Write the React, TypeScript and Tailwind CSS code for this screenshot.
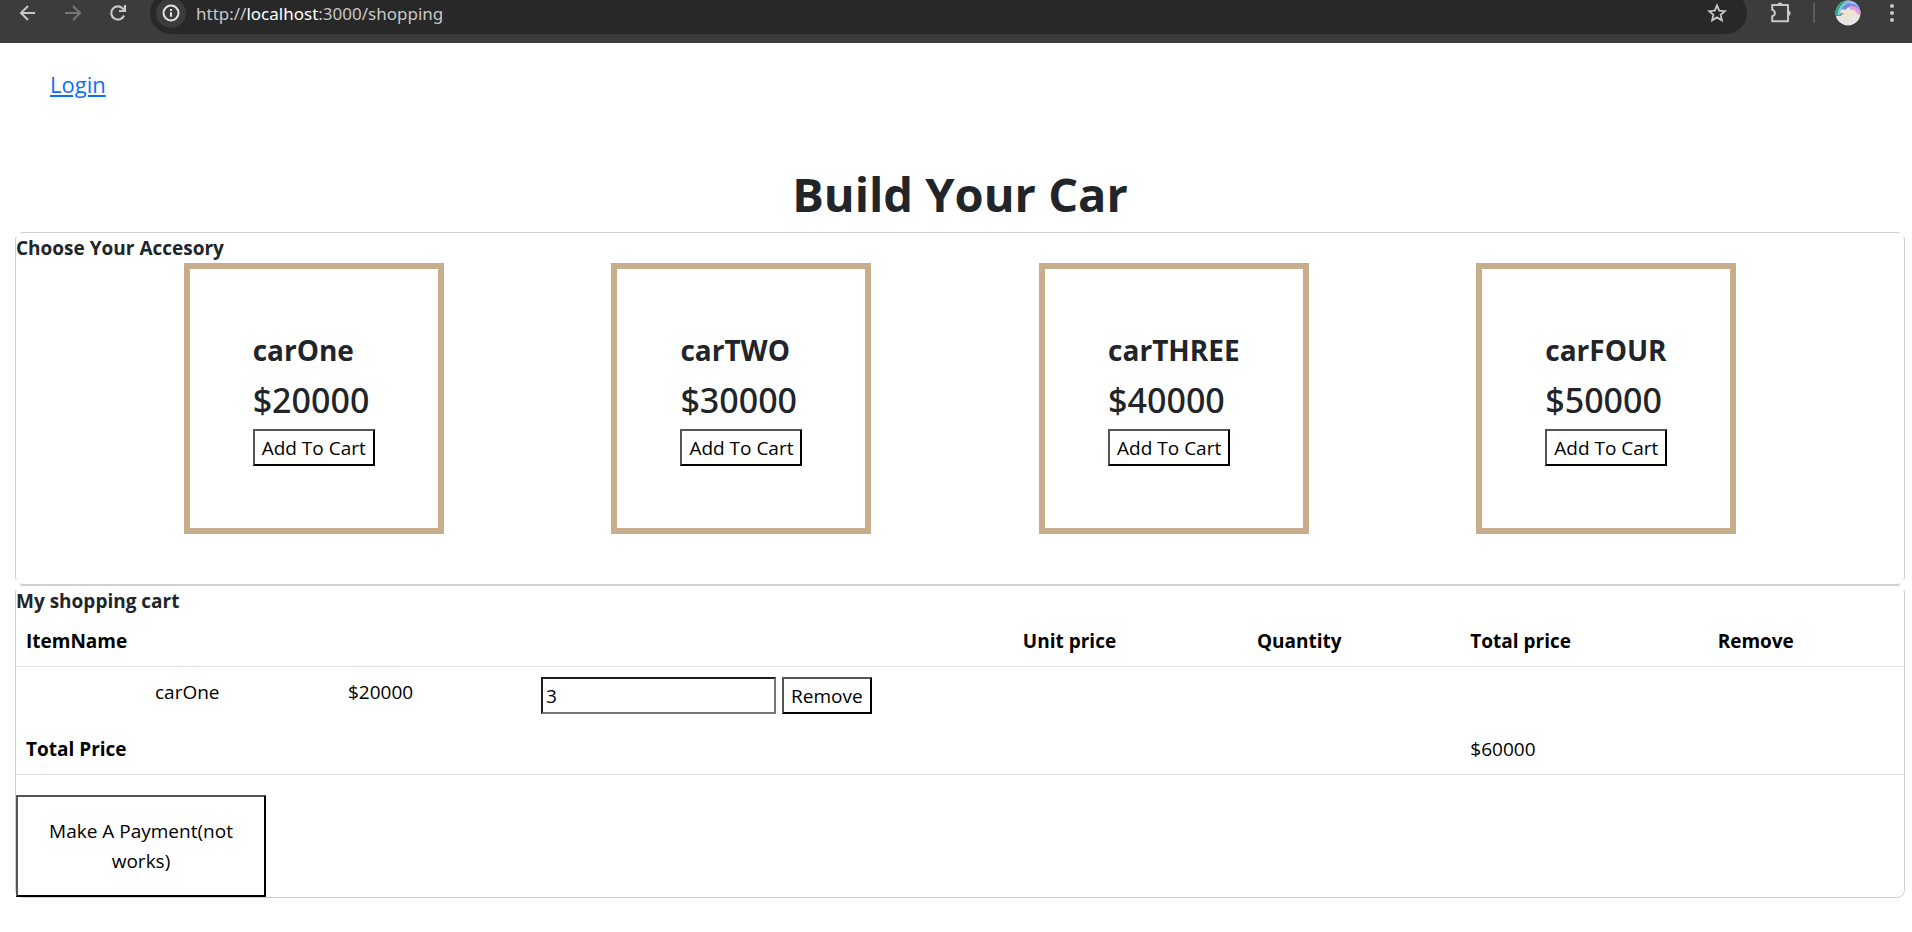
import { useState } from "react";

const cars = [
  { name: "carOne", price: 20000 },
  { name: "carTWO", price: 30000 },
  { name: "carTHREE", price: 40000 },
  { name: "carFOUR", price: 50000 },
];

const buttonClass =
  "border-2 border-t-[#555] border-l-[#555] border-r-black border-b-black bg-white text-black";

function BrowserBar() {
  return (
    <header className="h-[43px] overflow-hidden bg-[#3c3c3c] text-[#c7c7c7]">
      <div className="-mt-2 flex h-[42px] items-center">
        <button aria-label="Back" className="ml-[18px]">
          <svg className="size-5" viewBox="0 0 20 20" fill="none" stroke="currentColor" strokeWidth="2">
            <path d="M17 10H3.5M10 3L3 10l7 7" />
          </svg>
        </button>
        <button aria-label="Forward" className="ml-[25px] text-[#777]">
          <svg className="size-5" viewBox="0 0 20 20" fill="none" stroke="currentColor" strokeWidth="2">
            <path d="M2 10h13.500M10 3l7 7-7 7" />
          </svg>
        </button>
        <button aria-label="Reload" className="ml-[25px]">
          <svg className="size-5" viewBox="0 0 20 20" fill="none" stroke="currentColor" strokeWidth="2.200">
            <path d="M16 12.500a6.600 6.600 0 1 1-1.400-7.200l1.900 1.900" />
            <path d="M17 2v6h-6" />
          </svg>
        </button>
        <div className="ml-[22px] flex h-[42px] flex-1 items-center rounded-full bg-[#282828] pl-1.5 pr-5">
          <button aria-label="Site information" className="flex size-[30px] items-center justify-center rounded-full bg-[#3c3c3c] text-[#e3e3e3]">
            <svg className="size-[18px]" viewBox="0 0 18 18" fill="none" stroke="currentColor" strokeWidth="2">
              <circle cx="9" cy="9" r="7.500" />
              <path d="M9 8.200v4.600M9 5v2" />
            </svg>
          </button>
          <p className="ml-2.5 flex-1 pt-0.5 font-['Noto_Sans','Open_Sans',sans-serif] text-[17px] text-[#c7c7c7]">
            http://<span className="text-white">localhost</span>:3000/shopping
          </p>
          <button aria-label="Bookmark">
            <svg className="size-5" viewBox="0 0 20 20" fill="none" stroke="currentColor" strokeWidth="1.800">
              <path d="M10 2.400l2.200 5.200 5.700.5-4.300 3.700 1.300 5.500-4.900-2.900-4.900 2.900 1.300-5.500-4.300-3.700 5.700-.5z" />
            </svg>
          </button>
        </div>
        <button aria-label="Extensions" className="ml-[22px]">
          <svg className="size-6" viewBox="0 0 24 24" fill="none" stroke="currentColor" strokeWidth="2">
            <path d="M3.200 4h15.800v16.300H3.200v-5c3.600-1 3.600-5.400 0-6.400z" strokeLinejoin="round" />
            <path d="M8.500 4a2.600 2.600 0 0 1 5.200 0zM19 9.600a2.600 2.600 0 0 1 0 5.200z" fill="currentColor" stroke="none" />
          </svg>
        </button>
        <span className="ml-5 h-5 w-0.5 bg-[#5c5c5c]" />
        <button aria-label="Profile" className="ml-5">
          <svg className="size-[26px]" viewBox="0 0 26 26">
            <clipPath id="avatar"><circle cx="13" cy="13" r="12.500" /></clipPath>
            <g clipPath="url(#avatar)">
              <rect width="26" height="26" fill="#e6e6e6" />
              <path d="M0 0h12v4l-6 12H0z" fill="#2fa37b" />
              <path d="M4 15A14 14 0 0 1 14 2" fill="none" stroke="#7ccfe0" strokeWidth="3" />
              <path d="M7 14C9 5 14 2 26 10" fill="none" stroke="#7b83e0" strokeWidth="4" />
              <path d="M10 3C16-1 22 2 26 8" fill="none" stroke="#8fb4ee" strokeWidth="3" />
              <path d="M15 8c4-1 7 1 10 6" fill="none" stroke="#e0a0d8" strokeWidth="4" />
              <path d="M6 10l3-1 3 3 8 0 3 4-1 4-2-4-5 1-5 3-2 0 2-4-2-3-3 0z" fill="#efe4d2" />
            </g>
          </svg>
        </button>
        <button aria-label="Menu" className="ml-[25px] mr-3.5">
          <svg className="h-5 w-3" viewBox="0 0 12 20" fill="currentColor">
            <circle cx="6" cy="3" r="2" /><circle cx="6" cy="10" r="2" /><circle cx="6" cy="17" r="2" />
          </svg>
        </button>
      </div>
    </header>
  );
}

function Notches({ bottom }: { bottom?: boolean }) {
  return (
    <>
      <span className="absolute -left-px -top-px size-[5px] bg-white" />
      <span className="absolute -right-px -top-px size-[5px] bg-white" />
      {bottom && <span className="absolute -bottom-px -left-px size-[5px] bg-white" />}
      {bottom && <span className="absolute -bottom-px -right-px size-[5px] bg-white" />}
    </>
  );
}

export default function App() {
  const [quantity, setQuantity] = useState(3);
  return (
    <div className="min-h-screen bg-white font-['Open_Sans','Noto_Sans',sans-serif] text-[19px] leading-[30px] text-[#212529]">
      <BrowserBar />
      <nav className="px-[50px] pt-[23px]">
        <a href="#login" className="text-[22px] leading-9 text-[#0d6efd] underline">Login</a>
      </nav>
      <main className="pl-[15px] pr-[7px] pt-[62px]">
        <h1 className="text-center text-[47px] font-bold leading-[60px]">Build Your Car</h1>
        <section className="relative mt-2 rounded-lg border border-[#d0d0d0] pb-[50px]">
          <Notches bottom />
          <h2 className="font-bold">Choose Your Accesory</h2>
          <div className="flex justify-evenly">
            {cars.map((car) => (
              <article key={car.name} className="border-6 border-[#c8ad8d] px-[63px] py-[62px]">
                <h3 className="text-[28px] font-bold leading-[38px]">{car.name}</h3>
                <p className="mt-2.5 font-['Noto_Sans','Open_Sans',sans-serif] text-[34px] font-medium leading-[42px]">${car.price}</p>
                <button className={`${buttonClass} mt-2 h-[37px] px-[7px]`}>Add To Cart</button>
              </article>
            ))}
          </div>
        </section>
        <section className="relative rounded-lg border border-[#d0d0d0]">
          <Notches />
          <h2 className="font-bold">My shopping cart</h2>
          <table className="w-full table-fixed text-left text-black">
            <thead>
              <tr className="border-b border-[#dee2e6]">
                <th className="w-[52.8%] px-2.5 py-2.5">ItemName</th>
                <th className="w-[12.4%] px-2.5">Unit price</th>
                <th className="w-[11.3%] px-2.5">Quantity</th>
                <th className="w-[13.1%] px-2.5">Total price</th>
                <th className="px-2.5">Remove</th>
              </tr>
            </thead>
            <tbody>
              <tr>
                <td className="px-2.5 py-2.5" colSpan={5}>
                  <div className="flex pl-[129px]">
                    <span className="w-[193px]">carOne</span>
                    <span className="w-[193px]">$20000</span>
                    <input
                      aria-label="Quantity"
                      className="h-[37px] w-[235px] border-2 border-b-[#767676] border-l-[#1e1e1e] border-r-[#767676] border-t-[#1e1e1e] px-[3px]"
                      value={quantity}
                      onChange={(e) => setQuantity(Number(e.target.value) || 0)}
                    />
                    <button className={`${buttonClass} ml-1.5 h-[37px] px-[7px]`}>Remove</button>
                  </div>
                </td>
              </tr>
              <tr className="border-b border-[#dee2e6]">
                <th className="px-2.5 py-2.5" colSpan={3}>Total Price</th>
                <td className="px-2.5">${quantity * 20000}</td>
                <td />
              </tr>
            </tbody>
          </table>
          <button className={`${buttonClass} mt-5 w-[250px] px-5 py-[19px]`}>Make A Payment(not works)</button>
        </section>
      </main>
    </div>
  );
}
